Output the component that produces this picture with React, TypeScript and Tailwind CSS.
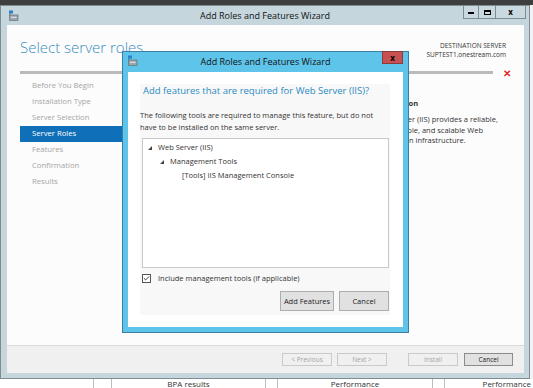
import { Check } from 'lucide-react';

const navItems = [
  'Before You Begin',
  'Installation Type',
  'Server Selection',
  'Server Roles',
  'Features',
  'Confirmation',
  'Results',
];

function WizardIcon() {
  return (
    <svg width="11" height="11" viewBox="0 0 11 11">
      <rect x="1" y="0.5" width="4" height="3" fill="#2f7fc7" />
      <rect x="1" y="3.5" width="2" height="1" fill="#2f7fc7" />
      <rect x="1.5" y="5" width="8.5" height="5.5" fill="#9aa4ab" stroke="#5c666c" strokeWidth="0.6" />
      <rect x="3" y="6.8" width="5.5" height="1" fill="#e6ecef" />
    </svg>
  );
}

function Expander() {
  return (
    <svg width="4" height="4" viewBox="0 0 4 4" className="shrink-0">
      <path d="M4 0 L4 4 L0 4 Z" fill="#444" />
    </svg>
  );
}

function FooterButton({ label, enabled = false }: { label: string; enabled?: boolean }) {
  return (
    <div
      className={
        enabled
          ? 'h-[13px] w-[49px] flex items-center justify-center border border-[#8c8c8c] bg-[#e1e1e1] text-[6.5px] text-[#222]'
          : 'h-[13px] w-[50px] flex items-center justify-center border border-[#cacaca] bg-[#f0f0f0] text-[6.5px] text-[#a4a4a4]'
      }
    >
      {label}
    </div>
  );
}

function AddFeaturesDialog() {
  return (
    <div className="absolute left-[122px] top-[51px] w-[287px] h-[282px] border border-[#3d7fa3] bg-[#5fc4e9] flex flex-col">
      {/* title bar */}
      <div className="relative h-[20px] flex items-center justify-center">
        <div className="absolute left-[4px] top-[3px]">
          <WizardIcon />
        </div>
        <span className="text-[9px] text-[#111]">Add Roles and Features Wizard</span>
        <div className="absolute right-[5px] top-[-1px] w-[21px] h-[13px] bg-[#c75050] border border-[#8e3b3b] flex items-center justify-center text-[8px] font-bold leading-none text-black">
          x
        </div>
      </div>

      {/* body */}
      <div className="mx-[5px] flex-1 mb-[5px] bg-white pl-[12px] pr-[13px] pt-[12px] pb-[12px]">
        <div className="h-full bg-[#f8f8f8] flex flex-col">
          <div className="pl-[3px] text-[9.5px] leading-[14px] text-[#2b8bc2]">
            Add features that are required for Web Server (IIS)?
          </div>
          <p className="mt-[11px] w-[242px] text-[7.5px] leading-[12px] text-[#333]">
            The following tools are required to manage this feature, but do not have to be installed on the same server.
          </p>
          <div className="mt-[5px] ml-[2px] mr-[1px] h-[130px] border border-[#c9c9c9] bg-white pt-[2px] text-[7.5px] text-[#333]">
            <div className="h-[14px] flex items-center gap-[6px] pl-[5px]">
              <Expander />
              <span>Web Server (IIS)</span>
            </div>
            <div className="h-[14px] flex items-center gap-[6px] pl-[17px]">
              <Expander />
              <span>Management Tools</span>
            </div>
            <div className="h-[14px] flex items-center pl-[39px]">
              <span>[Tools] IIS Management Console</span>
            </div>
          </div>
          <div className="mt-[5px] ml-[2px] flex items-center gap-[7px] text-[7.5px] text-[#333]">
            <div className="w-[9px] h-[9px] border border-[#555] bg-white flex items-center justify-center">
              <Check size={7} strokeWidth={3} color="#222" />
            </div>
            <span>Include management tools (if applicable)</span>
          </div>
          <div className="mt-[7px] mr-[1px] flex justify-end gap-[5px] text-[7.5px] text-[#222]">
            <div className="w-[54px] h-[20px] border border-[#adadad] bg-[#e1e1e1] flex items-center justify-center">
              Add Features
            </div>
            <div className="w-[50px] h-[20px] border border-[#adadad] bg-[#e1e1e1] flex items-center justify-center">
              Cancel
            </div>
          </div>
        </div>
      </div>
    </div>
  );
}

export default function App() {
  return (
    <div className="relative w-[533px] h-[388px] overflow-hidden bg-[#fafafa] font-['Open_Sans',sans-serif]">
      <div className="h-[5px] bg-[#3e3e3e]" />

      <div className="flex">
        {/* main wizard window */}
        <div className="w-[530px] h-[374px] border border-[#7e8d94] bg-[#c5d6dd] flex flex-col">
          <div className="relative h-[19px] flex items-center justify-center">
            <div className="absolute left-[7px] top-[4px]">
              <WizardIcon />
            </div>
            <span className="text-[9px] text-[#111]">Add Roles and Features Wizard</span>
            <div className="absolute right-[3px] top-[-1px] flex h-[14px] border border-[#7e8d94] bg-[#c9d9df]">
              <div className="w-[15px] flex items-end justify-center pb-[4px] border-r border-[#7e8d94]">
                <div className="w-[6px] h-[2px] bg-black" />
              </div>
              <div className="w-[17px] flex items-center justify-center border-r border-[#7e8d94]">
                <div className="w-[7px] h-[5px] border border-black border-t-2" />
              </div>
              <div className="w-[29px] flex items-center justify-center text-[8px] font-bold leading-none text-black">
                x
              </div>
            </div>
          </div>

          <div className="ml-[6px] mr-[5px] flex-1 mb-[5px] bg-[#fcfcfc] flex flex-col">
            {/* header */}
            <div className="h-[46px] flex justify-between">
              <div className="pl-[13px] pt-[12px] text-[15px] leading-[20px] font-light text-[#3a8cc0]">
                Select server roles
              </div>
              <div className="pr-[18px] pt-[16px] text-right text-[6.5px] leading-[9px] text-[#333]">
                <div>DESTINATION SERVER</div>
                <div>SUPTEST1.onestream.com</div>
              </div>
            </div>
            <div className="h-[3px] flex items-center">
              <div className="ml-[13px] w-[473px] h-[3px] bg-[#bababa]" />
              <div className="ml-[10px] text-[10px] font-bold leading-none text-[#e0282d]">✕</div>
            </div>

            {/* body */}
            <div className="flex-1 flex">
              <div className="ml-[13px] w-[150px] pt-[4px]">
                {navItems.map((item) => (
                  <div
                    key={item}
                    className={
                      item === 'Server Roles'
                        ? 'h-[16px] flex items-center pl-[12px] bg-[#0f6fb8] text-[7.7px] text-white'
                        : 'h-[16px] flex items-center pl-[12px] text-[7.7px] text-[#a5a5a5]'
                    }
                  >
                    {item}
                  </div>
                ))}
              </div>
              <div className="ml-[205px] w-[130px] pt-[23px] text-[7.5px] text-[#333]">
                <div className="font-bold leading-[12px]">Description</div>
                <p className="mt-[5px] leading-[10.5px]">
                  Web Server (IIS) provides a reliable, manageable, and scalable Web application infrastructure.
                </p>
              </div>
            </div>

            {/* footer */}
            <div className="h-[28px] border-t border-[#dadada] bg-[#f0f0f0] flex justify-end pt-[7px] pr-[11px]">
              <FooterButton label="< Previous" />
              <div className="ml-[5px]">
                <FooterButton label="Next >" />
              </div>
              <div className="ml-[21px]">
                <FooterButton label="Install" />
              </div>
              <div className="ml-[6px]">
                <FooterButton label="Cancel" enabled />
              </div>
            </div>
          </div>
        </div>
        <div className="flex-1 bg-[#f3f3f3]" />
      </div>

      {/* dashboard behind the wizard */}
      <div className="flex h-[9px] bg-white text-[8px] leading-[10px] text-[#333]">
        <div className="w-[94px] border-r border-[#bdbdbd]" />
        <div className="w-[18px] border-r border-[#bdbdbd]" />
        <div className="w-[154px] border-r border-[#bdbdbd] text-center">BPA results</div>
        <div className="w-[12px] border-r border-[#bdbdbd]" />
        <div className="w-[155px] border-r border-[#bdbdbd] text-center">Performance</div>
        <div className="w-[12px] border-r border-[#bdbdbd]" />
        <div className="flex-1 text-right pr-[2px]">Performance</div>
      </div>

      <AddFeaturesDialog />
    </div>
  );
}
